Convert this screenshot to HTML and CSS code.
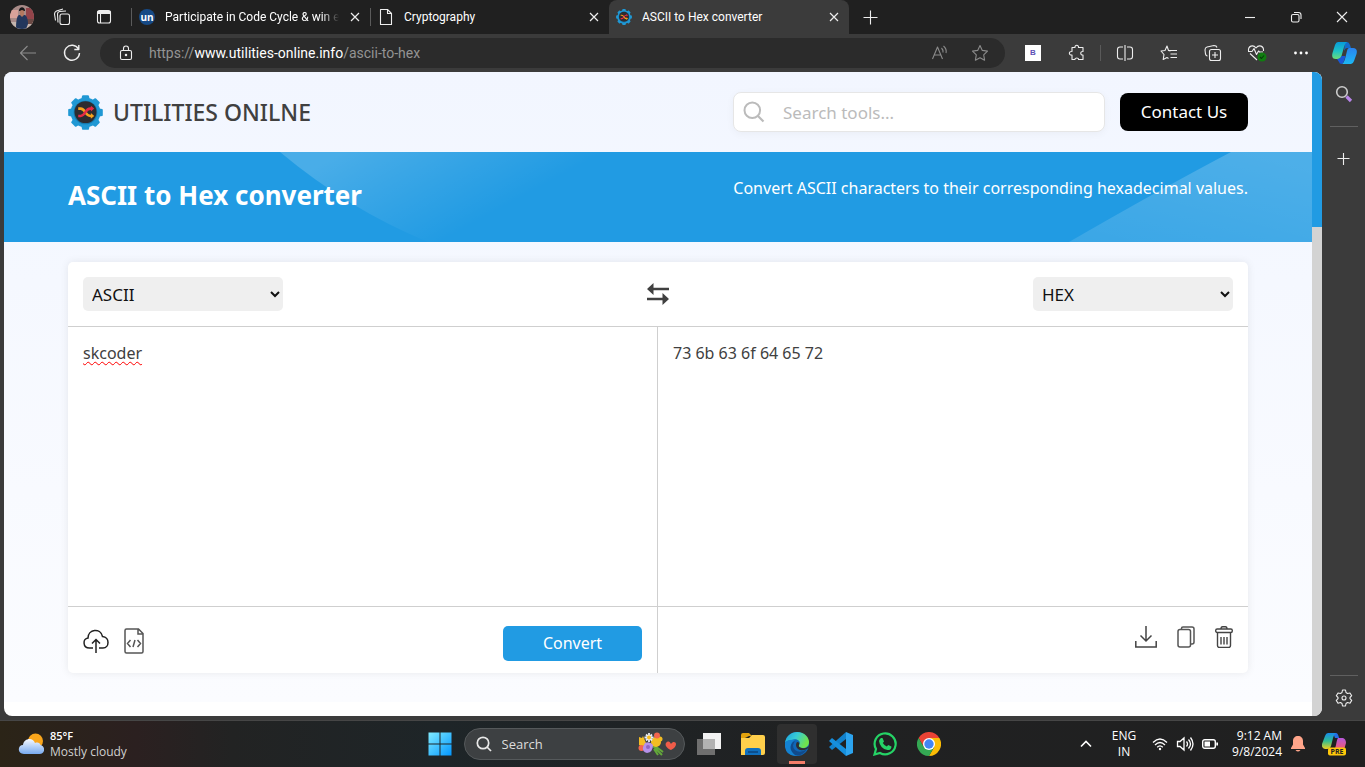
FILE: index.html
```html
<!DOCTYPE html>
<html lang="en">
<head>
<meta charset="utf-8">
<title>ASCII to Hex converter</title>
<link rel="stylesheet" href="styles.css">
</head>
<body>
<svg class="defs" aria-hidden="true">
  <defs>
    <symbol id="gear" viewBox="0 0 36 36">
      <g fill="#2098d4">
        <circle cx="18" cy="18" r="15.300"/>
        <g id="teeth">
          <path d="M13.800 4 14.500 .8Q14.800 .2 15.500 .2h5q.8 0 1 .6l.7 3.200v28l-.7 3.200q-.2.600-1 .600h-5q-.8 0-1-.6l-.7-3.200z"/>
        </g>
        <use href="#teeth" transform="rotate(45 18 18)"/>
        <use href="#teeth" transform="rotate(90 18 18)"/>
        <use href="#teeth" transform="rotate(135 18 18)"/>
      </g>
      <circle cx="18" cy="18" r="12.200" fill="#1679ad"/>
      <circle cx="18" cy="17.600" r="11.300" fill="#2d2c30"/>
      <path d="M10.500 14h2.500c5 0 4.500 7.500 10 7.500h1.500" fill="none" stroke="#f6a21c" stroke-width="2.600"/>
      <path d="M10.500 21.500h2.500c5 0 4.500-7.500 10-7.500h1.500" fill="none" stroke="#e42a45" stroke-width="2.600"/>
      <path d="M23.500 18.500v6l3.500-3z" fill="#f6a21c"/>
      <path d="M23.500 11v6l3.500-3z" fill="#e42a45"/>
    </symbol>
    <symbol id="close" viewBox="0 0 12 12"><path d="M2 2l8 8M10 2l-8 8" fill="none" stroke="#eee" stroke-width="1.200"/></symbol>
  </defs>
</svg>

<header class="tabstrip">
  <div class="strip-tools">
    <button class="avatar" aria-label="Profile">
      <svg width="24" height="24" viewBox="0 0 24 24"><clipPath id="av"><circle cx="12" cy="12" r="12"/></clipPath><g clip-path="url(#av)"><path fill="#a88b88" d="M0 0h24v24H0z"/><path fill="#d8a29a" d="M0 5h8v8H0z"/><path fill="#93444a" d="M16 3h8v12h-8z"/><path fill="#c4b5ad" d="M0 17h24v7H0z"/><path fill="#6b4a45" d="M16 14h8v5h-8z"/><path fill="#23375c" d="M6 24c0-9 1-13 3-14h6c2 1 3 5 3 9l-2 5z"/><path fill="#b27960" d="M10 5h4v5l-2 2-2-2z"/><path fill="#171719" d="M9 6c0-5 6-5 6 0l-1 0q-2-2-4 0z"/></g></svg>
    </button>
    <button aria-label="Workspaces"><svg width="18" height="18" viewBox="0 0 18 18" class="line"><rect x="7" y="6" width="9.500" height="10.500" rx="2"/><path d="M5 14.500 4.500 6q0-2 2-2.500L13 3M2.500 12.500 1.500 6q0-2 2-3L10 1"/></svg></button>
    <button aria-label="Tab actions"><svg width="16" height="16" viewBox="0 0 16 16" class="line"><rect x="1.500" y="1.500" width="13" height="12.500" rx="2"/><path d="M1.500 3.500h13" stroke-width="3"/><path d="M4.500 4v10"/></svg></button>
  </div>
  <nav class="tabs">
    <div class="tab">
      <svg width="16" height="16" viewBox="0 0 16 16"><circle cx="8" cy="8" r="8" fill="#174a86"/><text x="8" y="11.500" text-anchor="middle" class="un">un</text></svg>
      <a href="#" class="fade">Participate in Code Cycle &amp; win ex</a>
      <button aria-label="Close tab"><svg width="12" height="12"><use href="#close"/></svg></button>
    </div>
    <div class="tab">
      <svg width="16" height="18" viewBox="0 0 16 18" class="line"><path d="M2.500 1.500h7l4 4v11h-11zM9.500 1.500v4h4"/></svg>
      <a href="#">Cryptography</a>
      <button aria-label="Close tab"><svg width="12" height="12"><use href="#close"/></svg></button>
    </div>
    <div class="tab active">
      <svg width="16" height="16"><use href="#gear"/></svg>
      <a href="#">ASCII to Hex converter</a>
      <button aria-label="Close tab"><svg width="12" height="12"><use href="#close"/></svg></button>
    </div>
  </nav>
  <button class="new-tab" aria-label="New tab"><svg width="16" height="16" viewBox="0 0 16 16" class="line"><path d="M8.500 1.500v14M1.500 8.500h14"/></svg></button>
  <div class="window-controls">
    <button aria-label="Minimize"><svg width="12" height="12" viewBox="0 0 12 12" class="line"><path d="M1 6.500h10"/></svg></button>
    <button aria-label="Restore"><svg width="12" height="12" viewBox="0 0 12 12" class="line"><rect x="1.500" y="3.500" width="7.500" height="7.500" rx="1.500"/><path d="M4 1.500h4.500q2.500 0 2.500 2.500v4"/></svg></button>
    <button aria-label="Close"><svg width="12" height="12" viewBox="0 0 12 12" class="line"><path d="M1 1l10 10M11 1L1 11"/></svg></button>
  </div>
</header>

<div class="toolbar">
  <div class="nav-buttons">
    <button aria-label="Back"><svg width="18" height="18" viewBox="0 0 18 18" class="line dim"><path d="M17 9H1.500M8.500 2 1.500 9l7 7"/></svg></button>
    <button aria-label="Refresh"><svg width="18" height="18" viewBox="0 0 18 18" class="line bold"><path d="M15.500 5A7.500 7.500 0 1 0 16.500 9M15.800 1v4.500h-4.500"/></svg></button>
  </div>
  <div class="address">
    <svg width="14" height="18" viewBox="0 0 14 18" class="line"><rect x="1.500" y="6.500" width="11" height="9" rx="1.500"/><path d="M4.500 6.500V4.500a2.500 2.500 0 0 1 5 0v2"/><circle cx="7" cy="11" r=".7"/></svg>
    <a class="url" href="#">https://<b>www.utilities-online.info</b>/ascii-to-hex</a>
    <button aria-label="Read aloud"><svg width="18" height="18" viewBox="0 0 18 18" class="line dim"><path d="M1.500 15 6.500 3l5 12M3 11h7M10.500 4q2 2 1.500 4.500M12.500 2q3.500 3 2.500 7"/></svg></button>
    <button aria-label="Add to favorites"><svg width="18" height="18" viewBox="0 0 18 18" class="line dim"><path d="M9 1.500l2.300 4.900 5.200.7-3.800 3.700.9 5.400L9 13.700l-4.600 2.500.9-5.400L1.500 7.100l5.200-.7z"/></svg></button>
  </div>
  <div class="extensions">
    <button aria-label="B extension"><span class="b-ext">B</span></button>
    <button aria-label="Extensions"><svg width="18" height="18" viewBox="0 0 18 18" class="line"><path d="M4 3.500h3c-.5-3 4-3 3.500 0H15v4c-3-.5-3 4 0 3.500v4.500h-4.500c.5-2-4-2-3.500 0H4V11c-3.500.5-3.500-4 0-3.500z"/></svg></button>
  </div>
  <div class="tools">
    <button aria-label="Split screen"><svg width="18" height="18" viewBox="0 0 18 18" class="line"><path d="M7 3H4Q1.500 3 1.500 5.500v7Q1.500 15 4 15h3M11 3h3q2.500 0 2.500 2.500v7q0 2.500-2.500 2.500h-3M9 1v16"/></svg></button>
    <button aria-label="Favorites"><svg width="18" height="18" viewBox="0 0 18 18" class="line"><path d="M10.500 7 8.500 6.500 7 2 5 6.500 1 7l3 3.500-.8 5L7 13.500l1.500 1M9 6.500h8M10.500 10H17M10.500 13.500H17"/></svg></button>
    <button aria-label="Collections"><svg width="18" height="18" viewBox="0 0 18 18" class="line"><rect x="5.500" y="5.500" width="11" height="11" rx="2"/><path d="M11 8v6M8 11h6M3.500 12Q2 12 1.500 10L1 6Q1 3.500 3 3l7-1.500q2.500 0 3 2"/></svg></button>
    <button aria-label="Browser essentials"><svg width="20" height="18" viewBox="0 0 20 18" class="line"><path d="M10 16 3 9.500M1.500 7C1 2 6 0 9 4c3-4 8-2 7.500 3M1 7.500h4l2-3 2.500 6 2-3.500 1 1H16"/><circle cx="15" cy="13" r="4.500" fill="#107c10" stroke="none"/><path d="M13 13l1.500 1.500 2.500-3" stroke="#063d0a"/></svg></button>
    <button aria-label="Settings and more"><svg width="16" height="16" viewBox="0 0 16 16" fill="#fff"><circle cx="2.500" cy="8" r="1.400"/><circle cx="8" cy="8" r="1.400"/><circle cx="13.500" cy="8" r="1.400"/></svg></button>
  </div>
  <button class="copilot" aria-label="Copilot">
    <svg width="25" height="24" viewBox="0 0 25 24"><defs><linearGradient id="cpA" x1="0" y1="0" x2="0" y2="1"><stop offset="0" stop-color="#079bd9"/><stop offset=".55" stop-color="#20c3c3"/><stop offset="1" stop-color="#6ddd75"/></linearGradient><linearGradient id="cpB" x1="0" y1="0" x2="0" y2="1"><stop offset="0" stop-color="#2a83f0"/><stop offset="1" stop-color="#1cb8f4"/></linearGradient></defs><path fill="#126bcb" d="M13 1h2q2 0 3 3l1 3h-4q-2 0-3 3z"/><path fill="url(#cpA)" d="M6 1h9q-2 1-3 5L9.500 15Q9 18 6 18H4q-5 0-3.500-6L3 4q1-3 3-3z"/><path fill="url(#cpB)" d="M17 7h4q5 0 3.500 6L22 20q-1 3-3 3h-9q2-1 3-5l2-8q.5-3 2-3z"/><path fill="#1958d8" d="M5 18q3 0 4.500-3h4L12 20q-1 3-2.500 3-2 0-2.500-2z"/></svg>
  </button>
</div>

<main class="window">
  <div class="page">
    <div class="content">
      <header class="site-header">
        <a class="brand" href="#"><svg width="35" height="35"><use href="#gear"/></svg><span>UTILITIES ONILNE</span></a>
        <div class="site-actions">
          <label class="site-search">
            <svg width="22" height="22" viewBox="0 0 22 22"><path d="M14.500 14.500 20.500 20.500" stroke="#bbb" stroke-width="2.200"/><circle cx="9.300" cy="9.300" r="7.800" fill="none" stroke="#bbb" stroke-width="2"/></svg>
            <input type="search" placeholder="Search tools..." aria-label="Search tools">
          </label>
          <button class="contact">Contact Us</button>
        </div>
      </header>
      <section class="banner">
        <svg class="banner-art" viewBox="0 0 1308 90" preserveAspectRatio="none" aria-hidden="true">
          <defs>
            <linearGradient id="swL" gradientUnits="userSpaceOnUse" x1="340" y1="0" x2="400" y2="110"><stop offset="0" stop-color="#fff" stop-opacity=".18"/><stop offset="1" stop-color="#fff" stop-opacity="0"/></linearGradient>
            <linearGradient id="swR" gradientUnits="userSpaceOnUse" x1="1250" y1="0" x2="1210" y2="150"><stop offset="0" stop-color="#fff" stop-opacity=".2"/><stop offset="1" stop-color="#fff" stop-opacity=".1"/></linearGradient>
          </defs>
          <path fill="url(#swL)" d="M276 0Q344 57 424 90H526Q576 50 596 0z"/>
          <path fill="url(#swR)" d="M1227 0Q1155 38 1065 90H1308V0z"/>
        </svg>
        <h1>ASCII to Hex converter</h1>
        <p>Convert ASCII characters to their corresponding hexadecimal values.</p>
      </section>
      <section class="converter">
        <div class="formats">
          <select aria-label="Input format"><option>ASCII</option></select>
          <button class="icon-btn" aria-label="Swap formats"><svg width="24" height="24" viewBox="0 0 24 24"><path fill="#404040" d="M1 7 7.500 1v4.800h15.500v2.400H7.500V13zM23 17l-6.500-6v4.800H1v2.400h15.500V23z"/></svg></button>
          <select aria-label="Output format"><option>HEX</option></select>
        </div>
        <div class="panels">
          <div class="panel">
            <textarea class="misspelled" spellcheck="false" aria-label="ASCII input">skcoder</textarea>
            <div class="panel-actions">
              <div class="icons">
                <button class="icon-btn" aria-label="Upload file"><svg width="26" height="26" viewBox="0 0 26 26" fill="none" stroke="#222" stroke-width="1.500"><path d="M10 20H6.500C-.5 20-.5 10.500 5 10 5 1 17.500-.5 19.500 8.500 27 9 26.500 20 20 20h-4M13 25V12M9 15.500l4-4 4 4"/></svg></button>
                <button class="icon-btn" aria-label="Load from URL"><svg width="20" height="26" viewBox="0 0 20 26" fill="none" stroke="#555" stroke-width="1.500"><path d="M2.500 1h12L19 5.500v18Q19 25 17.500 25h-15Q1 25 1 23.500v-21Q1 1 2.500 1zM14 1v5h5M6.500 12 3.500 15.500l3 3.500M13.500 12l3 3.500-3 3.500M11 12l-2 7"/></svg></button>
              </div>
              <button class="convert">Convert</button>
            </div>
          </div>
          <div class="panel">
            <textarea spellcheck="false" readonly aria-label="Hex output">73 6b 63 6f 64 65 72</textarea>
            <div class="panel-actions output-actions">
              <div class="icons">
                <button class="icon-btn" aria-label="Download"><svg width="22" height="22" viewBox="0 0 22 22" fill="none" stroke="#444" stroke-width="1.500"><path d="M11 0v15M5.500 9.500 11 15l5.500-5.500M.8 15v6h20.400v-6"/></svg></button>
                <button class="icon-btn" aria-label="Copy"><svg width="18" height="22" viewBox="0 0 18 22" fill="none" stroke="#555" stroke-width="1.500"><rect x="1" y="3.500" width="12.500" height="17.500" rx="2"/><path d="M4.500 3V2.500Q4.500 1 6 1h9q2 0 2 2v13q0 2-2 2h-1"/></svg></button>
                <button class="icon-btn" aria-label="Clear"><svg width="18" height="22" viewBox="0 0 18 22" fill="none" stroke="#444" stroke-width="1.400"><rect x=".7" y="3" width="16.600" height="3.500" rx="1.500"/><path d="M2.500 6.500v13q0 2 2 2h9q2 0 2-2v-13M6 3Q6 .8 7.500.8h3Q12 .8 12 3M6 11v7.500M9 11v7.500M12 11v7.500"/></svg></button>
              </div>
            </div>
          </div>
        </div>
      </section>
    </div>
    <div class="scrollbar"><div class="thumb"></div></div>
  </div>
  <aside class="sidebar">
    <button aria-label="Search sidebar"><svg width="18" height="18" viewBox="0 0 18 18" fill="none"><circle cx="7" cy="7" r="5.300" stroke="#ccc" stroke-width="1.600"/><path d="M11.500 11.500 16 16" stroke="#b884e8" stroke-width="3.200"/></svg></button>
    <hr>
    <button aria-label="Customize sidebar"><svg width="14" height="14" viewBox="0 0 14 14" class="line"><path d="M6.500 1v12M.5 6.500h12"/></svg></button>
    <hr class="push">
    <button aria-label="Sidebar settings"><svg width="18" height="18" viewBox="0 0 18 18" class="line"><path d="M7.500 1h3l.5 2.500 1.500 1L15 4l1.700 2.700L15 8.500v1.200l1.700 1.700L15 14.200l-2.500-.7-1.500 1-.5 2.500h-3L7 14.500l-1.500-1-2.500.7-1.700-2.800L3 9.700V8.500L1.300 6.700 3 4l2.500.5L7 3.500z"/><circle cx="9" cy="9" r="2"/></svg></button>
  </aside>
</main>

<footer class="taskbar">
  <a class="weather" href="#">
    <svg width="26" height="22" viewBox="0 0 26 22"><defs><linearGradient id="cl" x1="0" y1="0" x2="0" y2="1"><stop offset="0" stop-color="#f5f9ff"/><stop offset="1" stop-color="#78aaf0"/></linearGradient></defs><circle cx="17.500" cy="8" r="7.500" fill="#f9a51b"/><path fill="url(#cl)" d="M6 21C-1 21-.5 12 5 12 6 5 15 4 17 10c3-1 5 0 5.500 2 5 1 5 9-1 9z"/></svg>
    <span><strong>85°F</strong><small>Mostly cloudy</small></span>
  </a>
  <div class="apps">
    <button aria-label="Start"><svg width="24" height="24" viewBox="0 0 24 24"><defs><linearGradient id="win" gradientUnits="userSpaceOnUse" x1="0" y1="0" x2="24" y2="24"><stop offset="0" stop-color="#83edff"/><stop offset="1" stop-color="#0095ff"/></linearGradient></defs><path fill="url(#win)" d="M.5.500h11v11H.5zM12.500.500h11v11h-11zM.5 12.500h11v11H.5zM12.500 12.500h11v11h-11z"/></svg></button>
    <label class="task-search">
      <svg width="16" height="16" viewBox="0 0 16 16" fill="none" stroke="#e8e8e8" stroke-width="1.700"><circle cx="7" cy="7" r="5.700"/><path d="M11 11l4 4"/></svg>
      <input type="text" placeholder="Search" aria-label="Search Windows">
      <svg width="40" height="26" viewBox="0 0 40 26"><path d="M14 13 25 24M18 15l8 6M17 18l4 6" stroke="#63a83a" stroke-width="2"/><g fill="#f3bd23"><path d="M2 6l3 1 1-2 3 7-3 4-4-2z"/><circle cx="19" cy="11" r="5"/><circle cx="23" cy="8" r="2.500"/></g><g fill="#f3654e"><circle cx="4.500" cy="17" r="3"/><circle cx="20" cy="4.500" r="3"/></g><path fill="#b591ea" d="M8 12q5-2 8 2 0 7-6 8-5-1-4-6z"/><circle cx="11" cy="16" r="2" fill="#8d64c5"/><g stroke="#e9edf4" stroke-width="1.800"><path d="M12 2v9M7.500 6.500h9M9 3.500l6 6M15 3.500l-6 6"/></g><circle cx="12" cy="6.500" r="2" fill="#f9bd20"/><path fill="#f05c49" d="M34 19c-5-2-7-6-4-8 2-1 3 0 4 2 2-3 5-2 5 0 0 3-3 5-5 6z"/></svg>
    </label>
    <button aria-label="Task view"><svg width="24" height="22" viewBox="0 0 24 22"><path fill="#f2f2f2" d="M6 0h18v16H6z"/><path fill="#6f6f6f" d="M0 6h18v16H0z"/><path fill="#b2b2b2" d="M6 6h12v10H6z"/></svg></button>
    <button aria-label="File Explorer"><svg width="24" height="22" viewBox="0 0 24 22"><path fill="#e2a20d" d="M0 2Q0 0 2 0h6l3 3h-3l-8 4z"/><path fill="#ffcf4b" d="M0 5h8l3-3h11q2 0 2 2v16q0 2-2 2H0z"/><path fill="#0f6fbe" d="M4 22v-4q0-3 3-3h10q3 0 3 3v4z"/><path fill="#0b4e8d" d="M7 18h10v2H7z"/></svg></button>
    <button class="current" aria-label="Microsoft Edge"><svg width="24" height="24" viewBox="0 0 24 24"><defs><linearGradient id="ed" x1="0" y1="0" x2="1" y2=".4"><stop offset="0" stop-color="#1ba0df"/><stop offset=".5" stop-color="#37cbd4"/><stop offset="1" stop-color="#70e44c"/></linearGradient></defs><circle cx="12" cy="12" r="12" fill="#0f67b8"/><path fill="url(#ed)" d="M0 11C1 4 6 0 12 0c8 0 12 6 12 10 0 4-3 6-6 6-4 0-5-2-4-3 3-4-3-7-7-5-3 0-6 1-7 3z"/><path fill="#1482d2" d="M0 11q3-4 10-3Q4 11 7 18q2 4 7 5Q2 26 0 15z"/><path fill="#114a8b" d="M10 9q-4 5 0 9 5 4 12-1-5 8-12 6-6-5-4-10 1-3 4-4z"/><path fill="#2f2f2f" d="M12 10q3 0 2 3-1 2 3 3 4 1 7-2 0 2-2 3-7 3-10-1-2-3 0-6z"/></svg></button>
    <button aria-label="Visual Studio Code"><svg width="24" height="24" viewBox="0 0 24 24"><path fill="#2ca4ef" d="m17 0 7 3v18l-7 3z"/><path fill="#1181cc" d="M17 0v7L3 18l-3-3z"/><path fill="#168fdd" d="m0 9 3-3 14 11v7z"/></svg></button>
    <button aria-label="WhatsApp"><svg width="24" height="24" viewBox="0 0 24 24" fill="none"><path d="M1.500 22.500 3 17A10.500 10.500 0 1 1 7 21z" stroke="#25d366" stroke-width="2.200"/><path fill="#25d366" d="M8 6h1.500l1.500 3.500-1.200 1.500q1.500 2.500 4 3.500l1.400-1.600 3.300 1.500q0 3.600-4 3.600Q7 16.500 6 9q.5-2 2-3z"/></svg></button>
    <button aria-label="Google Chrome"><svg width="24" height="24" viewBox="0 0 24 24"><path fill="#ea4335" d="M1.600 6A12 12 0 0 1 22.400 6H12L6.800 15z"/><path fill="#fbbc05" d="M22.400 6A12 12 0 0 1 12 24l5.200-9L12 6z"/><path fill="#34a853" d="M1.600 6A12 12 0 0 0 12 24l5.200-9H6.800z"/><circle cx="12" cy="12" r="6" fill="#fff"/><circle cx="12" cy="12" r="4.700" fill="#4285f4"/></svg></button>
  </div>
  <div class="tray">
    <button aria-label="Show hidden icons"><svg width="12" height="8" viewBox="0 0 12 8" fill="none" stroke="#fff" stroke-width="1.600"><path d="M1 6.500 6 1.500l5 5"/></svg></button>
    <button class="lang">ENG<br>IN</button>
    <button class="status" aria-label="Network, volume and battery">
      <svg width="16" height="14" viewBox="0 0 16 14" fill="none" stroke="#fff" stroke-width="1.300"><path d="M1 5.500q7-7 14 0M3 8q5-5 10 0M5.200 10.200q2.800-2.600 5.600 0"/><circle cx="8" cy="12" r="1.200" fill="#fff" stroke="none"/></svg>
      <svg width="18" height="16" viewBox="0 0 18 16" fill="none" stroke="#fff" stroke-width="1.300"><path d="M1.500 5.500H4L8 2v12l-4-3.500H1.500zM10.500 5.500q2 2.500 0 5M12.500 3.500q4 4.500 0 9M14.500 1.500q5 6.500 0 13"/></svg>
      <svg width="16" height="10" viewBox="0 0 16 10"><rect x=".7" y=".7" width="12.600" height="8.600" rx="2" fill="none" stroke="#fff" stroke-width="1.400"/><path fill="#fff" d="M2.500 2.500H8v5H2.500zM14.300 3.500H16v3h-1.700z"/></svg>
    </button>
    <button class="clock">9:12 AM<br>9/8/2024</button>
    <button class="bell" aria-label="Notifications"><svg width="14" height="16" viewBox="0 0 14 16" fill="#ffa58a"><path d="M7 0c3 0 5 2 5 5v3.500l2 3.500v1H0v-1l2-3.500V5c0-3 2-5 5-5zM4.500 14h5q-2.500 3-5 0z"/></svg></button>
    <button class="pre" aria-label="Copilot preview"><svg width="24" height="24" viewBox="0 0 24 24"><defs><linearGradient id="pa" x1="0" y1="0" x2="0" y2="1"><stop offset="0" stop-color="#168bec"/><stop offset=".5" stop-color="#31bd91"/><stop offset="1" stop-color="#edcf20"/></linearGradient><linearGradient id="pb" x1="0" y1="0" x2="0" y2="1"><stop offset="0" stop-color="#b557dc"/><stop offset="1" stop-color="#f75b67"/></linearGradient></defs><path fill="#246de6" d="M11 1h3q2 0 3 5h-4z"/><path fill="url(#pa)" d="M6 1h8q-2 1-3 5l-2 8q-1 3-4 3-6 0-5-5l3-8q1-3 3-3z"/><path fill="url(#pb)" d="M16 6h5q3 1 3 5l-2 7h-9q0-2 1-5 1-6 2-7z"/><rect x="6" y="15.500" width="18" height="8" rx="2" fill="#ffc80a"/><text x="15" y="22" text-anchor="middle" class="pre-text">PRE</text></svg></button>
  </div>
</footer>
</body>
</html>
```

FILE: styles.css
```css
* { box-sizing: border-box; }
body {
  margin: 0;
  min-height: 100vh;
  display: flex;
  flex-direction: column;
  background: #3b3b3b;
  color: #fff;
  font: 12px/16px "Open Sans", "Noto Sans", sans-serif;
}
button, input, select, textarea { font: inherit; color: inherit; }
button {
  display: flex;
  align-items: center;
  justify-content: center;
  padding: 0;
  border: 0;
  background: none;
}
a { color: inherit; text-decoration: none; }
svg { display: block; flex: none; }
.defs { position: absolute; width: 0; height: 0; }
.line { fill: none; stroke: #eee; stroke-width: 1.1; stroke-linejoin: round; }
.line.dim { stroke: #8b8b8b; }
.line.bold { stroke-width: 1.4; }

/* Tab strip */
.tabstrip { display: flex; height: 34px; background: #202020; }
.strip-tools { display: flex; padding-left: 2px; }
.strip-tools button { width: 40px; }
.strip-tools button:last-child { width: 44px; }
.tabs { display: flex; margin-left: 5px; }
.tab {
  display: flex;
  align-items: center;
  gap: 10px;
  width: 239px;
  margin: 8px 0;
  padding: 0 9px 0 7px;
  border-left: 1px solid #5b5b5b;
}
.tab a { flex: 1; min-width: 0; white-space: nowrap; font: 12px/18px Roboto, "Open Sans", sans-serif; }
.tab .fade { mask-image: linear-gradient(90deg, #000 90%, transparent); }
.tab.active { width: 240px; margin: 0; padding: 0 9px 0 7px; border: 0; border-radius: 8px 8px 0 0; background: #3b3b3b; }
.un { font: bold 10px "Open Sans", sans-serif; fill: #fff; }
.new-tab { width: 42px; }
.window-controls { display: flex; margin-left: auto; }
.window-controls button { width: 46px; }

/* Toolbar */
.toolbar { display: flex; align-items: center; height: 38px; }
.nav-buttons, .extensions, .tools { display: flex; }
.nav-buttons { padding: 0 6px; }
.toolbar button { width: 44px; height: 30px; }
.address {
  flex: 1;
  display: flex;
  align-items: center;
  height: 30px;
  margin-right: 6px;
  padding: 0 5px 0 19px;
  border-radius: 15px;
  background: #2b2b2b;
}
.address button { width: 40px; }
.url { flex: 1; padding-left: 16px; color: #949494; font: 14px/20px Roboto, "Open Sans", sans-serif; }
.url b { font-weight: 400; color: #fff; }
.b-ext { width: 16px; height: 16px; background: #fff; color: #5c4fb5; font: bold 8px/16px "Liberation Sans", sans-serif; }
.extensions { margin-right: 1px; }
.tools { padding-left: 3px; background: linear-gradient(#5a5a5a, #5a5a5a) left center / 1px 16px no-repeat; }
.toolbar .copilot { width: 42px; }

/* Browser window */
.window { flex: 1; display: flex; padding: 0 0 4px 4px; }
.page { flex: 1; display: flex; border-radius: 8px; overflow: hidden; background: #fff; }
.content {
  flex: 1;
  display: flex;
  flex-direction: column;
  margin-bottom: 14px;
  background: linear-gradient(#f2f6ff, #fbfcff);
  color: #404040;
  font-family: "Noto Sans", sans-serif;
}
.scrollbar { width: 10px; background: #d3d3d3; }
.thumb { height: 24%; background: #219be3; }
.site-header { display: flex; align-items: center; justify-content: space-between; height: 80px; padding: 0 64px; }
.brand { display: flex; align-items: center; gap: 10px; font-size: 23px; font-weight: 500; line-height: 32px; }
.site-actions { display: flex; align-items: center; gap: 15px; }
.site-search {
  display: flex;
  align-items: center;
  gap: 18px;
  width: 372px;
  height: 40px;
  padding: 0 9px;
  border: 1px solid #e6e6e6;
  border-radius: 8px;
  background: #fff;
  box-shadow: 0 2px 8px #0000000a;
}
.site-search input { flex: 1; min-width: 0; padding: 0; border: 0; outline: 0; background: none; font-size: 17px; }
.site-search input::placeholder { color: #bbb; }
.contact { width: 128px; height: 38px; border-radius: 8px; background: #000; color: #fff; font-size: 17px; }
.banner {
  position: relative;
  display: flex;
  align-items: flex-start;
  justify-content: space-between;
  height: 90px;
  padding: 24px 64px;
  background: #219be3;
  color: #fff;
}
.banner-art { position: absolute; inset: 0; width: 100%; height: 100%; }
.banner h1 { position: relative; margin: 0; font-size: 26px; font-weight: 700; line-height: 38px; }
.banner p { position: relative; margin: 0; font-size: 16px; line-height: 24px; }

/* Converter card */
.converter {
  flex: 1;
  display: flex;
  flex-direction: column;
  margin: 20px 64px 29px;
  border-radius: 5px;
  background: #fff;
  box-shadow: 0 0 8px #00000014;
}
.formats { display: flex; align-items: center; justify-content: space-between; height: 65px; padding: 0 15px; border-bottom: 1px solid #cfcfcf; }
.formats select { width: 200px; height: 34px; padding: 0 0 0 5px; border: 0; border-radius: 5px; background: #efefef; color: #111; font-size: 17px; }
.panels { flex: 1; display: grid; grid-template-columns: 1fr 1fr; }
.panel { display: flex; flex-direction: column; }
.panel:first-child { border-right: 1px solid #cfcfcf; }
.panel textarea { flex: 1; min-height: 160px; padding: 14px 15px; border: 0; outline: 0; resize: none; background: none; font-size: 16px; line-height: 24px; }
.misspelled { text-decoration: underline wavy #f00 1px; text-decoration-skip-ink: none; text-underline-offset: 2px; }
.panel-actions { display: flex; align-items: center; justify-content: space-between; height: 67px; padding: 2px 15px 0; border-top: 1px solid #cfcfcf; }
.icons { display: flex; align-items: center; gap: 15px; }
.output-actions { align-items: flex-start; justify-content: flex-end; padding-top: 19px; }
.output-actions .icons { gap: 20px; }
.convert { width: 139px; height: 35px; margin-top: 4px; border-radius: 5px; background: #219be3; color: #fff; font-size: 16px; }

/* Edge sidebar */
.sidebar { display: flex; flex-direction: column; align-items: center; width: 43px; padding: 6px 0 2px; }
.sidebar button { width: 32px; height: 32px; }
.sidebar hr { width: 28px; margin: 16px 0; border: 0; border-top: 1px solid #606060; }
.sidebar .push { margin: auto 0 6px; }

/* Taskbar */
.taskbar {
  display: grid;
  grid-template-columns: 1fr auto 1fr;
  align-items: center;
  height: 47px;
  border-top: 1px solid #464646;
  background: linear-gradient(90deg, #2b2417, #2b2020 10%, #222323 17%, #1e2528 32%, #202122 60%, #202020);
}
.weather { display: flex; align-items: center; gap: 6px; padding-left: 18px; }
.weather strong, .weather small { display: block; font-size: 12px; font-weight: 400; }
.weather strong { font-size: 11px; font-weight: 600; }
.weather small { color: #d0d0d0; }
.apps { display: flex; align-items: center; gap: 4px; margin-left: 3px; }
.apps button { width: 40px; height: 40px; border-radius: 4px; }
.apps .current { background: linear-gradient(#f47d69, #f47d69) center bottom / 16px 3px no-repeat, #2f2f2f; }
.task-search { display: flex; align-items: center; gap: 10px; width: 221px; height: 32px; padding: 0 7px 0 11px; border: 1px solid #55595b; border-radius: 16px; background: #3d4042; }
.task-search input { flex: 1; min-width: 0; padding: 0; border: 0; outline: 0; background: none; font-size: 13px; }
.task-search input::placeholder { color: #ddd; }
.tray { display: flex; align-items: center; justify-content: flex-end; }
.tray button { height: 36px; }
.lang { width: 52px; margin-left: 6px; }
.status { gap: 8px; padding: 0 2px; }
.tray .clock { width: 62px; justify-content: flex-end; text-align: right; }
.bell { width: 32px; }
.pre { width: 40px; margin-right: 11px; }
.pre-text { font: bold 7px "Open Sans", sans-serif; fill: #222; }
```
